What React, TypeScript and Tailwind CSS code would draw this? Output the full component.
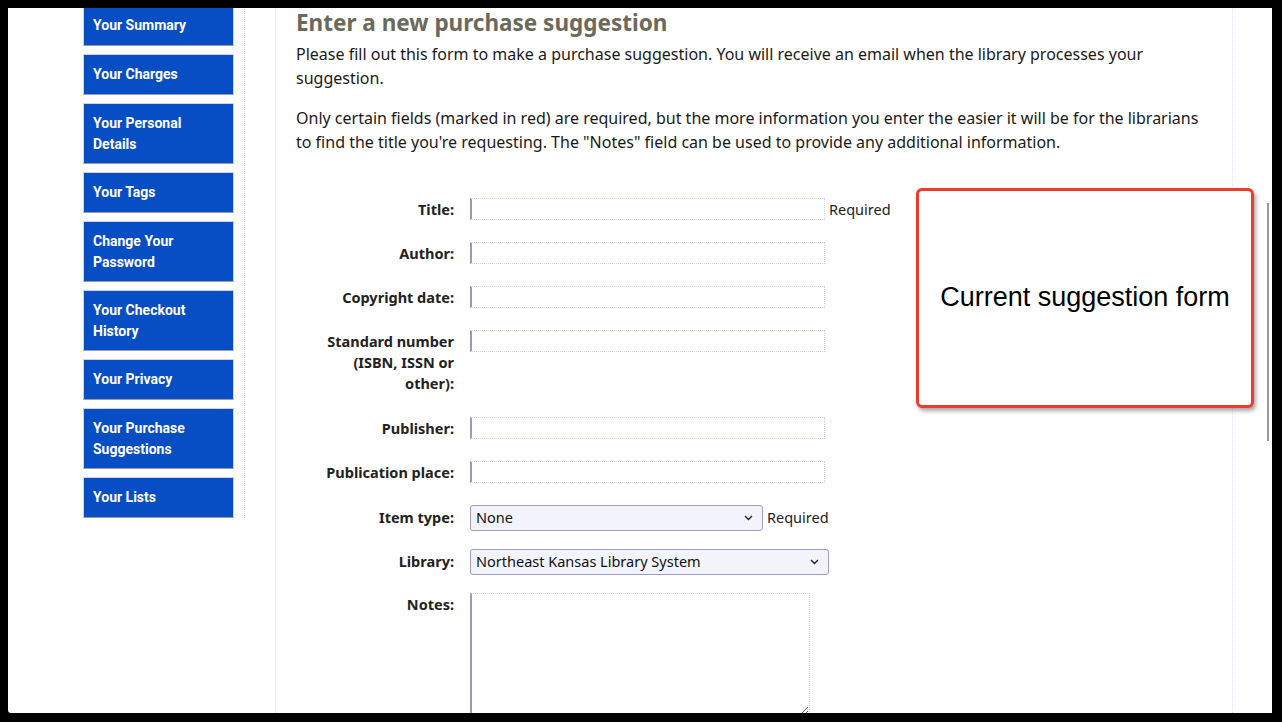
import React from 'react';

const navItems: { label: string; tall?: boolean }[] = [
  { label: 'Your Summary' },
  { label: 'Your Charges' },
  { label: 'Your Personal Details', tall: true },
  { label: 'Your Tags' },
  { label: 'Change Your Password', tall: true },
  { label: 'Your Checkout History', tall: true },
  { label: 'Your Privacy' },
  { label: 'Your Purchase Suggestions', tall: true },
  { label: 'Your Lists' },
];

const textFields: { label: string[]; required?: boolean }[] = [
  { label: ['Title:'], required: true },
  { label: ['Author:'] },
  { label: ['Copyright date:'] },
  { label: ['Standard number', '(ISBN, ISSN or', 'other):'] },
  { label: ['Publisher:'] },
  { label: ['Publication place:'] },
];

const Chevron = () => (
  <svg width="9" height="6" viewBox="0 0 9 6" className="shrink-0">
    <path d="M1 1l3.5 3.5L8 1" fill="none" stroke="#222" strokeWidth="1.4" />
  </svg>
);

const FakeSelect = ({ value, width }: { value: string; width: string }) => (
  <div
    className={`${width} h-[26px] flex items-center justify-between pl-[5px] pr-[9px] rounded-[3px] border border-[#9d9dcc] bg-[#f3f3fb] text-[14.5px] text-[#111]`}
  >
    <span>{value}</span>
    <Chevron />
  </div>
);

export default function App() {
  return (
    <div className="h-[722px] w-[1282px] bg-black pt-[8px] pl-[8px] pr-[10px] pb-[9px] overflow-hidden">
      <div
        className="relative h-full w-full bg-white overflow-hidden rounded-bl-[3px] flex"
        style={{ fontFamily: '"Noto Sans", "Open Sans", sans-serif' }}
      >
        {/* sidebar */}
        <div className="ml-[75px] w-[162px] self-start pr-[10px] border-r border-dotted border-[#c9c9f0] mt-[-3px]">
          <ul className="flex flex-col gap-[8px]">
            {navItems.map((item) => (
              <li
                key={item.label}
                className={`w-[151px] ${item.tall ? 'h-[61px]' : 'h-[41px]'} bg-[#074dc4] border border-[#cdd0ee] border-b-[#9a9aae] px-[9px] pt-[9px] text-white font-bold text-[14px] leading-[21px]`}
                style={{ fontFamily: 'Roboto, "Liberation Sans", sans-serif' }}
              >
                {item.label}
              </li>
            ))}
          </ul>
        </div>

        {/* main column */}
        <div className="ml-[30px] w-[958px] h-full border-l border-r border-dotted border-[#dedef5] pl-[20px] pr-[20px]">
          <h1 className="text-[22.5px] leading-[30px] font-bold text-[#6b6a5a]">
            Enter a new purchase suggestion
          </h1>
          <p className="mt-[4px] text-[16px] leading-[24px] text-[#1a1a1a]">
            Please fill out this form to make a purchase suggestion. You will receive an email when the library
            processes your suggestion.
          </p>
          <p className="mt-[16px] text-[16px] leading-[24px] text-[#1a1a1a]">
            Only certain fields (marked in red) are required, but the more information you enter the easier it will
            be for the librarians to find the title you're requesting. The "Notes" field can be used to provide any
            additional information.
          </p>

          <form className="mt-[44px] flex flex-col">
            {textFields.map((f) => (
              <div
                key={f.label[0]}
                className={`flex items-start ${f.label.length > 1 ? 'mb-[23px]' : 'mb-[22px] h-[22px]'}`}
              >
                <label className="w-[158px] text-right font-bold text-[14.5px] leading-[21px] text-[#222] pt-[1px]">
                  {f.label.map((l) => (
                    <div key={l}>{l}</div>
                  ))}
                </label>
                <input
                  type="text"
                  className="ml-[16px] w-[355px] h-[22px] border border-dotted border-[#cfcff0] border-l-[2px] border-l-[#9a9ab8] outline-none"
                  style={{ borderLeftStyle: 'solid' }}
                />
                {f.required && <span className="ml-[4px] text-[14.5px] leading-[22px] text-[#222]">Required</span>}
              </div>
            ))}

            <div className="flex items-center h-[26px] mb-[18px]">
              <label className="w-[158px] text-right font-bold text-[14.5px] text-[#222]">Item type:</label>
              <div className="ml-[16px]">
                <FakeSelect value="None" width="w-[293px]" />
              </div>
              <span className="ml-[4px] text-[14.5px] text-[#222]">Required</span>
            </div>

            <div className="flex items-center h-[26px] mb-[18px]">
              <label className="w-[158px] text-right font-bold text-[14.5px] text-[#222]">Library:</label>
              <div className="ml-[16px]">
                <FakeSelect value="Northeast Kansas Library System" width="w-[359px]" />
              </div>
            </div>

            <div className="flex items-start">
              <label className="w-[158px] text-right font-bold text-[14.5px] leading-[21px] text-[#222] pt-[1px]">
                Notes:
              </label>
              <textarea
                className="ml-[16px] w-[340px] h-[123px] border border-dotted border-[#cfcff0] border-l-[2px] border-l-[#9a9ab8] outline-none"
                style={{ borderLeftStyle: 'solid' }}
              />
            </div>
          </form>
        </div>

        {/* scrollbar thumb */}
        <div className="absolute left-[1259px] top-[195px] w-[2px] h-[238px] bg-[#9a9a9a]" />

        {/* annotation callout */}
        <div className="absolute left-[908px] top-[180px] w-[338px] h-[220px] rounded-[6px] border-[3px] border-[#f03a2e] bg-white shadow-[2px_3px_4px_rgba(0,0,0,0.35)] flex items-center justify-center">
          <span
            className="text-[27px] text-black mt-[-1px]"
            style={{ fontFamily: '"Liberation Sans", Arial, sans-serif' }}
          >
            Current suggestion form
          </span>
        </div>
      </div>
    </div>
  );
}
